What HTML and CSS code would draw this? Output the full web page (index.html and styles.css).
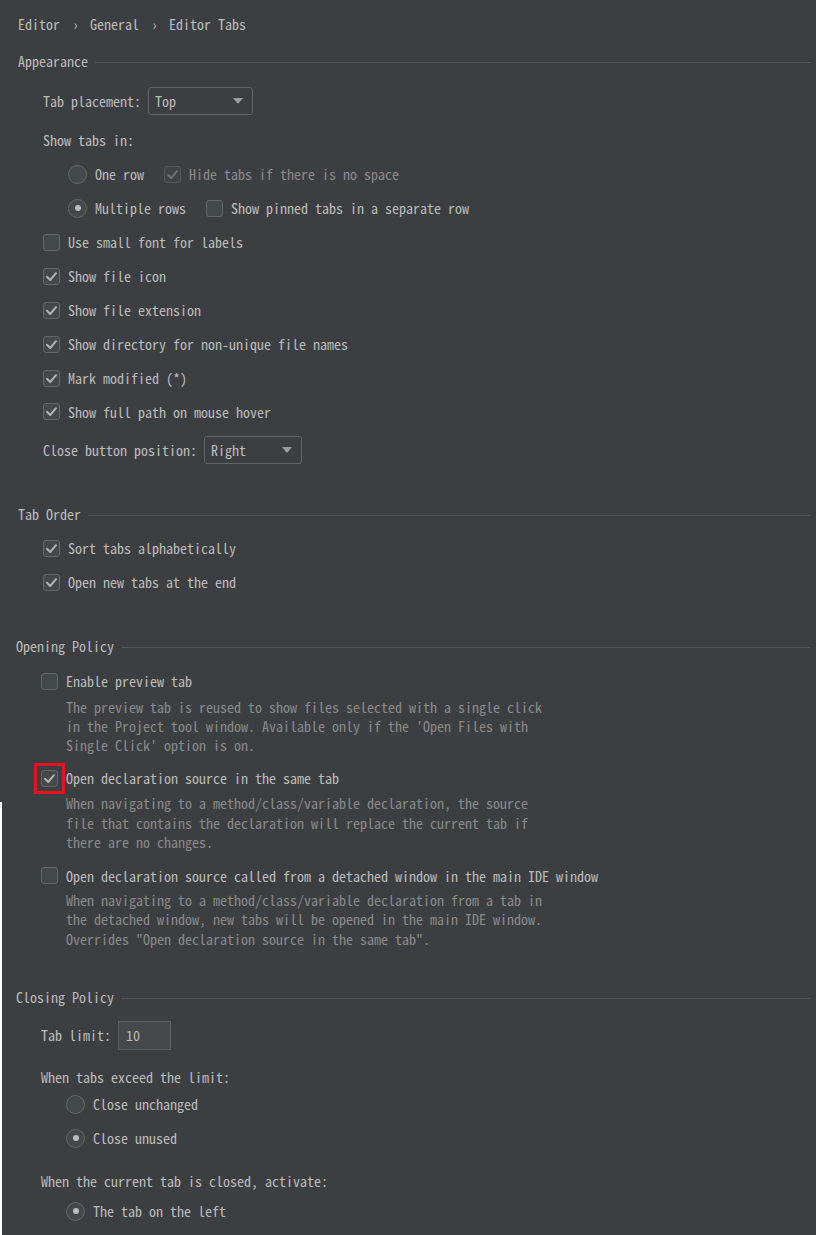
FILE: index.html
```html
<!DOCTYPE html>
<html>
<head>
<meta charset="utf-8">
<link rel="stylesheet" href="styles.css">
</head>
<body>
<div class="page">
  <div class="crumbs">
    <span>Editor</span><span class="sep">›</span><span>General</span><span class="sep">›</span><span>Editor Tabs</span>
  </div>

  <div class="top">
    <div class="group-title g-appearance"><span>Appearance</span><i class="rule"></i></div>
    <div class="body">
      <div class="row r-first">
        <span>Tab placement:</span>
        <div class="combo combo-top"><span>Top</span><i class="arrow"></i></div>
      </div>
      <div class="label l-show">Show tabs in:</div>
      <div class="indent r-after-label">
        <div class="row">
          <span class="radio"></span><span class="txt">One row</span>
          <span class="check sub disabled"><svg viewBox="0 0 17 17"><path d="M4 8.8 L7.2 12 L13 5.2"/></svg></span><span class="txt dim">Hide tabs if there is no space</span>
        </div>
        <div class="row">
          <span class="radio on"></span><span class="txt">Multiple rows</span>
          <span class="check sub"></span><span class="txt">Show pinned tabs in a separate row</span>
        </div>
      </div>
      <div class="row"><span class="check"></span><span class="txt">Use small font for labels</span></div>
      <div class="row"><span class="check"><svg viewBox="0 0 17 17"><path d="M4 8.8 L7.2 12 L13 5.2"/></svg></span><span class="txt">Show file icon</span></div>
      <div class="row"><span class="check"><svg viewBox="0 0 17 17"><path d="M4 8.8 L7.2 12 L13 5.2"/></svg></span><span class="txt">Show file extension</span></div>
      <div class="row"><span class="check"><svg viewBox="0 0 17 17"><path d="M4 8.8 L7.2 12 L13 5.2"/></svg></span><span class="txt">Show directory for non-unique file names</span></div>
      <div class="row"><span class="check"><svg viewBox="0 0 17 17"><path d="M4 8.8 L7.2 12 L13 5.2"/></svg></span><span class="txt">Mark modified (*)</span></div>
      <div class="row r-short"><span class="check"><svg viewBox="0 0 17 17"><path d="M4 8.8 L7.2 12 L13 5.2"/></svg></span><span class="txt">Show full path on mouse hover</span></div>
      <div class="row r-close">
        <span>Close button position:</span>
        <div class="combo combo-right"><span>Right</span><i class="arrow"></i></div>
      </div>
    </div>

    <div class="group-title g-next"><span>Tab Order</span><i class="rule"></i></div>
    <div class="body">
      <div class="row r-first-order"><span class="check"><svg viewBox="0 0 17 17"><path d="M4 8.8 L7.2 12 L13 5.2"/></svg></span><span class="txt">Sort tabs alphabetically</span></div>
      <div class="row"><span class="check"><svg viewBox="0 0 17 17"><path d="M4 8.8 L7.2 12 L13 5.2"/></svg></span><span class="txt">Open new tabs at the end</span></div>
    </div>
  </div>

  <div class="bottom">
    <div class="group-title g-next"><span>Opening Policy</span><i class="rule"></i></div>
    <div class="body">
      <div class="row r-first-open"><span class="check"></span><span class="txt">Enable preview tab</span></div>
      <div class="desc d-1">The preview tab is reused to show files selected with a single click<br>in the Project tool window. Available only if the 'Open Files with<br>Single Click' option is on.</div>
      <div class="row r-after-desc"><span class="check marked"><svg viewBox="0 0 17 17"><path d="M4 8.8 L7.2 12 L13 5.2"/></svg></span><span class="txt">Open declaration source in the same tab</span></div>
      <div class="desc d-2">When navigating to a method/class/variable declaration, the source<br>file that contains the declaration will replace the current tab if<br>there are no changes.</div>
      <div class="row r-after-desc"><span class="check"></span><span class="txt">Open declaration source called from a detached window in the main IDE window</span></div>
      <div class="desc d-3">When navigating to a method/class/variable declaration from a tab in<br>the detached window, new tabs will be opened in the main IDE window.<br>Overrides "Open declaration source in the same tab".</div>
    </div>

    <div class="group-title g-closing"><span>Closing Policy</span><i class="rule"></i></div>
    <div class="body">
      <div class="row r-limit">
        <span>Tab limit:</span>
        <div class="field">10</div>
      </div>
      <div class="label l-exceed">When tabs exceed the limit:</div>
      <div class="indent">
        <div class="row"><span class="radio"></span><span class="txt">Close unchanged</span></div>
        <div class="row"><span class="radio on"></span><span class="txt">Close unused</span></div>
      </div>
      <div class="label l-activate">When the current tab is closed, activate:</div>
      <div class="indent r-left">
        <div class="row"><span class="radio on"></span><span class="txt">The tab on the left</span></div>
      </div>
    </div>
  </div>
</div>
</body>
</html>
```

FILE: styles.css
```css
html, body {
  margin: 0;
  padding: 0;
  background: #3c3f41;
}
body {
  width: 816px;
  height: 1235px;
  overflow: hidden;
  font-family: "Noto Sans Mono CJK KR", "Noto Sans Mono CJK SC", "D2Coding", "Liberation Mono", monospace;
  font-size: 14px;
  color: #bbbbbb;
}
.page {
  position: relative;
  height: 1235px;
  padding: 14px 5px 0 18px;
  box-sizing: border-box;
}
.page::after {
  content: "";
  position: absolute;
  left: 0;
  top: 802px;
  width: 2px;
  bottom: 0;
  background: #ffffff;
}
.crumbs {
  height: 20px;
  line-height: 20px;
  display: flex;
  white-space: pre;
}
.crumbs .sep {
  display: inline-block;
  width: 7px;
  text-align: center;
  margin: 0 11px 0 12px;
}
.group-title {
  display: flex;
  align-items: center;
  height: 20px;
  line-height: 20px;
}
.group-title .rule {
  flex: 1;
  height: 1px;
  background: #535658;
  margin-left: 7px;
  margin-top: 2px;
}
.g-appearance { margin-top: 17px; }
.g-next { margin-top: 37px; }
.g-closing { margin-top: 38px; }
.bottom {
  margin-left: -2px;
  margin-right: 1px;
}
.body {
  padding-left: 25px;
}
.row {
  display: flex;
  align-items: center;
  height: 34px;
  white-space: pre;
}
.label {
  height: 20px;
  line-height: 20px;
  white-space: pre;
}
.indent {
  padding-left: 25px;
}
.r-first { margin-top: 13px; }
.l-show { margin-top: 12px; }
.r-after-label { margin-top: 7px; }
.r-short { height: 33px; }
.r-close { margin-top: 5px; }
.r-first-order { margin-top: 7px; }
.r-first-open { margin-top: 8px; }
.r-after-desc { margin-top: 6px; }
.r-limit { margin-top: 11px; }
.l-exceed { margin-top: 15px; }
.l-activate { margin-top: 16px; }
.r-left { margin-top: 3px; }

.txt { margin-left: 8px; }
.dim { color: #8a8a8a; }

.check {
  position: relative;
  width: 17px;
  height: 17px;
  box-sizing: border-box;
  border: 1px solid #656869;
  border-radius: 3px;
  background: #43494a;
  flex: none;
}
.check svg {
  position: absolute;
  left: -1px;
  top: -1px;
  width: 17px;
  height: 17px;
  fill: none;
  stroke: #b3b3b3;
  stroke-width: 2;
  stroke-linecap: round;
  stroke-linejoin: round;
}
.check.sub { margin-left: 20px; }
.check.disabled { border-color: #55585a; background: #3f4345; }
.check.disabled svg { stroke: #6f7172; }
.check.marked::after {
  content: "";
  position: absolute;
  left: -8px;
  top: -8px;
  width: 31px;
  height: 31px;
  box-sizing: border-box;
  border: 3px solid #e8121e;
}

.radio {
  position: relative;
  width: 19px;
  height: 19px;
  box-sizing: border-box;
  border: 1px solid #656869;
  border-radius: 50%;
  background: #43494a;
  flex: none;
}
.radio.on::after {
  content: "";
  position: absolute;
  left: 5.5px;
  top: 5.5px;
  width: 6px;
  height: 6px;
  border-radius: 50%;
  background: #bbbbbb;
}

.combo {
  display: flex;
  align-items: center;
  justify-content: space-between;
  height: 28px;
  box-sizing: border-box;
  margin-left: 7px;
  padding: 0 9px 0 6px;
  border: 1px solid #646464;
  border-radius: 3px;
  background: #3c3f41;
}
.combo-top { width: 105px; }
.combo-right { width: 98px; }
.arrow {
  width: 0;
  height: 0;
  border-left: 5px solid transparent;
  border-right: 5px solid transparent;
  border-top: 6px solid #9a9c9e;
}
.field {
  margin-left: 7px;
  width: 53px;
  height: 29px;
  box-sizing: border-box;
  padding-left: 7px;
  line-height: 27px;
  border: 1px solid #5e6062;
  background: #45494a;
}
.desc {
  margin-left: 25px;
  line-height: 19.5px;
  color: #8a8a8a;
  white-space: pre;
}
.d-1 { margin-top: 0; line-height: 19px; }
.d-2 { margin-top: -1px; }
.d-3 { margin-top: -2px; }
```
